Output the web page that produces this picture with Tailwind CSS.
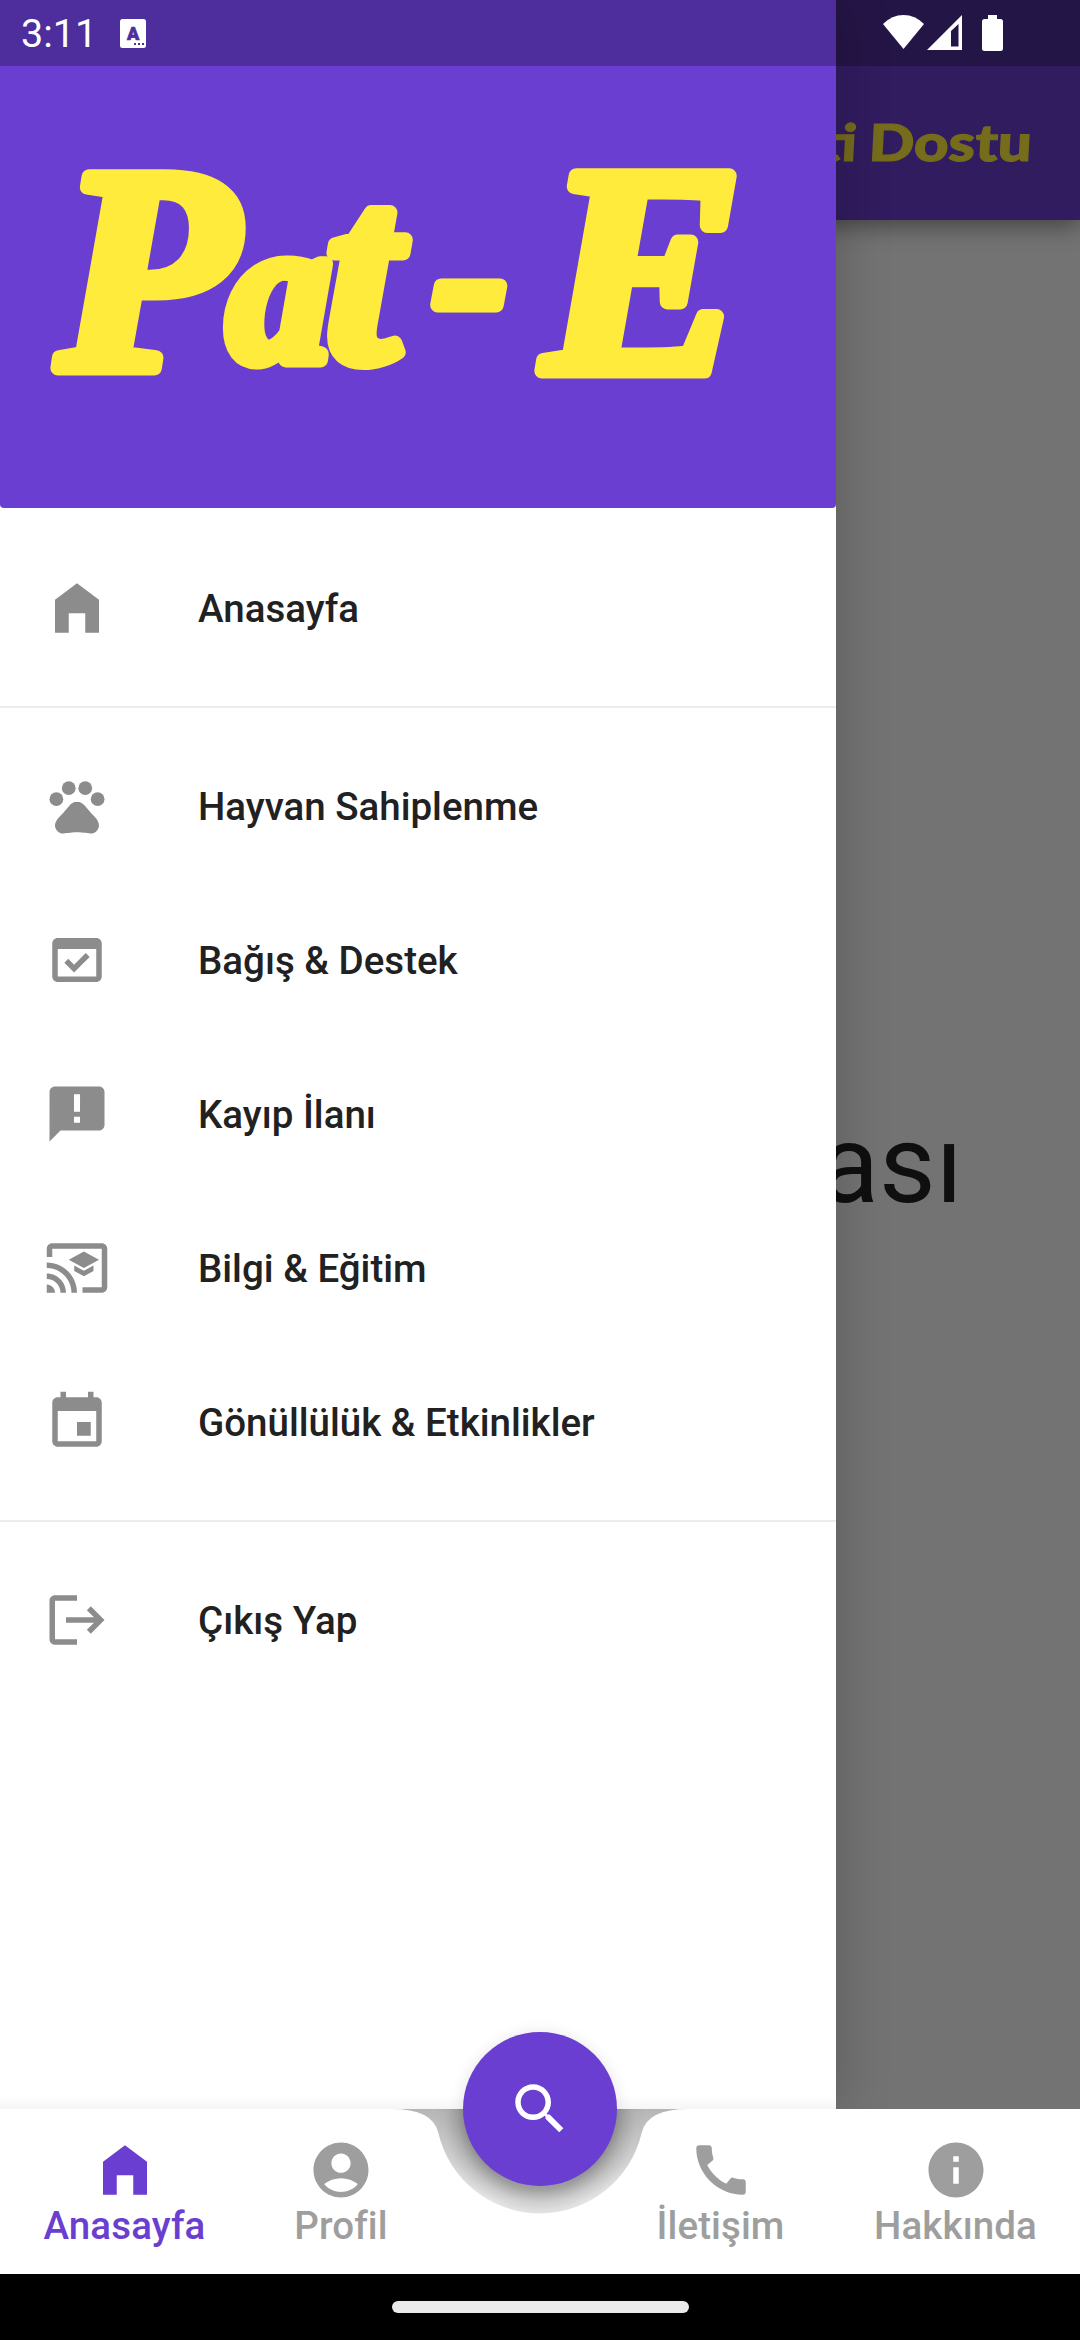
<!DOCTYPE html>
<html lang="tr">
<head>
<meta charset="utf-8">
<title>Pat-E</title>
<script src="https://cdn.jsdelivr.net/npm/@tailwindcss/browser@4"></script>
</head>
<body class="bg-black">
<div class="relative flex h-[2340px] w-[1080px] flex-col overflow-hidden font-['Roboto',sans-serif]">

  <!-- Dimmed page behind the drawer -->
  <header class="relative z-10 flex h-[220px] shrink-0 items-center justify-end bg-[#311c5f] pt-[66px] pr-[48px] shadow-[0_6px_22px_rgba(0,0,0,0.42)]">
    <svg class="h-[80px] w-[216px]" viewBox="0 0 216 80">
      <g class="fill-[#756c1c] stroke-[#756c1c] font-['Lato'] text-[51px] font-black" stroke-width="1.2" transform="translate(0 58) skewX(-3)">
        <text x="2" y="0" textLength="38" lengthAdjust="spacingAndGlyphs">ti</text>
        <text x="52" y="0" textLength="163" lengthAdjust="spacingAndGlyphs">Dostu</text>
      </g>
    </svg>
  </header>
  <main class="flex h-[1889px] shrink-0 items-center justify-end bg-[#737373] pr-[117px]">
    <p class="text-[110px] leading-[129px] text-[#0f0f0f]">ası</p>
  </main>

  <!-- Bottom bar -->
  <nav class="relative z-30 h-[165px] shrink-0 bg-linear-to-b from-[#b6b6b6] from-0% to-[#eeeeee] to-55%">
    <svg class="absolute inset-0 h-[165px] w-[1080px] overflow-visible" viewBox="0 0 1080 165">
      <defs>
        <radialGradient id="glow" cx="540" cy="11" r="106" gradientUnits="userSpaceOnUse">
          <stop offset=".66" stop-color="#000" stop-opacity=".27"/>
          <stop offset=".78" stop-color="#000" stop-opacity=".13"/>
          <stop offset=".9" stop-color="#000" stop-opacity=".03"/>
          <stop offset="1" stop-color="#000" stop-opacity="0"/>
        </radialGradient>
        <linearGradient id="edge" x1="0" y1="0" x2="0" y2="1">
          <stop offset="0" stop-color="#000" stop-opacity="0"/>
          <stop offset="1" stop-color="#000" stop-opacity=".035"/>
        </linearGradient>
      </defs>
      <rect x="0" y="-14" width="836" height="14" fill="url(#edge)"/>
      <path d="M420 0h240v120H420z" fill="url(#glow)"/>
      <path d="M0 0H391.5Q432.75 0 438.2 23.5A104.5 104.5 0 0 0 641.8 23.5Q647.25 0 688.5 0H1080V165H0z" fill="#fff"/>
    </svg>
    <div class="relative flex h-full pt-[28px] text-[38.5px] leading-[45px] font-medium tracking-[0.1px] text-[#9e9e9e]">
      <a class="flex w-[249px] flex-col items-center text-[#693ed0]">
        <svg class="size-[66px]" viewBox="0 0 24 24" fill="currentColor"><path d="M4 9v12h5v-7.1h6V21h5V9l-8-6z"/></svg>
        <span>Anasayfa</span>
      </a>
      <a class="flex w-[184px] flex-col items-center">
        <svg class="size-[66px]" viewBox="0 0 24 24" fill="currentColor"><path d="M12 2C6.48 2 2 6.48 2 12s4.480 10 10 10 10-4.480 10-10S17.520 2 12 2zm0 4c1.930 0 3.500 1.570 3.500 3.500S13.930 13 12 13s-3.500-1.570-3.500-3.500S10.070 6 12 6zm0 14c-2.030 0-4.430-.820-6.140-2.880C7.550 15.800 9.680 15 12 15s4.450.800 6.140 2.120C16.430 19.180 14.030 20 12 20z"/></svg>
        <span>Profil</span>
      </a>
      <a class="ml-[174px] flex w-[227px] flex-col items-center">
        <svg class="size-[66px]" viewBox="0 0 24 24" fill="currentColor"><path d="M20.010 15.380c-1.230 0-2.420-.200-3.530-.560-.350-.120-.740-.030-1.010.240l-1.570 1.970c-2.830-1.350-5.480-3.900-6.890-6.830l1.950-1.660c.270-.280.350-.670.240-1.020-.370-1.110-.560-2.300-.560-3.530 0-.540-.450-.990-.990-.990H4.190C3.650 3 3 3.240 3 3.990 3 13.280 10.730 21 20.010 21c.710 0 .990-.630.990-1.180v-3.450c0-.540-.450-.990-.990-.990z"/></svg>
        <span>İletişim</span>
      </a>
      <a class="flex w-[243px] flex-col items-center">
        <svg class="size-[66px]" viewBox="0 0 24 24" fill="currentColor"><path d="M12 2C6.480 2 2 6.480 2 12s4.480 10 10 10 10-4.480 10-10S17.520 2 12 2zm1 15h-2v-6h2v6zm0-8h-2V7h2v2z"/></svg>
        <span>Hakkında</span>
      </a>
    </div>
  </nav>

  <!-- System gesture bar -->
  <footer class="relative flex h-[66px] shrink-0 justify-center bg-black pt-[27px]">
    <div class="h-3 w-[297px] rounded-full bg-[#ebebeb]"></div>
  </footer>

  <!-- Navigation drawer -->
  <aside class="absolute top-0 left-0 z-20 h-[2109px] w-[836px] bg-white shadow-[0_0_50px_rgba(0,0,0,0.22)]">
    <div class="h-[508px] rounded-b-[4px] bg-[#693ed0]">
      <svg class="h-[508px] w-[836px]" viewBox="0 0 836 508">
        <g class="fill-[#ffeb3b] stroke-[#ffeb3b] font-['Liberation_Serif'] font-bold italic" stroke-width="15" stroke-linejoin="round">
          <text transform="translate(58 368)" font-size="292">P</text>
          <text transform="translate(228 360)" font-size="205">a</text>
          <text transform="translate(326 360)" font-size="262">t</text>
          <text transform="translate(433 348)" font-size="225">-</text>
          <text transform="translate(544 371)" font-size="298">E</text>
        </g>
      </svg>
    </div>
    <ul class="pt-[23px] text-[38.5px] leading-[45px] font-medium text-[#212121]">
      <li class="flex h-[154px] items-center gap-[88px] pl-[44px]">
        <svg class="size-[66px] text-[#8c8c8c]" viewBox="0 0 24 24" fill="currentColor"><path d="M4 9v12h5v-7.100h6V21h5V9l-8-6z"/></svg>
        <span>Anasayfa</span>
      </li>
      <li class="flex h-[44px] items-center"><div class="h-[2px] w-full bg-[#ececec]"></div></li>
      <li class="flex h-[154px] items-center gap-[88px] pl-[44px]">
        <svg class="size-[66px] text-[#8c8c8c]" viewBox="0 0 24 24" fill="currentColor"><circle cx="4.500" cy="9.500" r="2.500"/><circle cx="9" cy="5.500" r="2.500"/><circle cx="15" cy="5.500" r="2.500"/><circle cx="19.500" cy="9.500" r="2.500"/><path d="M17.340 14.860c-.870-1.020-1.600-1.890-2.480-2.910-.460-.540-1.050-1.080-1.750-1.320-.110-.040-.220-.070-.330-.090-.250-.040-.520-.040-.780-.040s-.530 0-.790.050c-.110.020-.220.050-.330.090-.700.240-1.280.780-1.750 1.320-.870 1.020-1.600 1.890-2.480 2.910-1.310 1.310-2.920 2.760-2.620 4.790.290 1.020 1.020 2.030 2.330 2.320.730.150 3.060-.440 5.540-.440h.180c2.480 0 4.810.580 5.540.440 1.310-.290 2.040-1.310 2.330-2.320.310-2.040-1.300-3.490-2.610-4.800z"/></svg>
        <span>Hayvan Sahiplenme</span>
      </li>
      <li class="flex h-[154px] items-center gap-[88px] pl-[44px]">
        <svg class="size-[66px] text-[#8c8c8c]" viewBox="0 0 24 24" fill="currentColor"><path d="M16.600 10.880l-1.420-1.420-4.240 4.250-2.120-2.130L7.400 13l3.540 3.540z"/><path d="M19 4H5c-1.110 0-2 .900-2 2v12c0 1.100.890 2 2 2h14c1.100 0 2-.900 2-2V6c0-1.100-.890-2-2-2zm0 14H5V8h14v10z"/></svg>
        <span>Bağış &amp; Destek</span>
      </li>
      <li class="flex h-[154px] items-center gap-[88px] pl-[44px]">
        <svg class="size-[66px] text-[#8c8c8c]" viewBox="0 0 24 24" fill="currentColor"><path d="M20 2H4c-1.100 0-1.990.900-1.990 2L2 22l4-4h14c1.100 0 2-.900 2-2V4c0-1.100-.900-2-2-2zm-6.900 13.200h-2.200V13h2.200v2.200zm0-4h-2.200V4.800h2.200v6.400z"/></svg>
        <span>Kayıp İlanı</span>
      </li>
      <li class="flex h-[154px] items-center gap-[88px] pl-[44px]">
        <svg class="size-[66px] text-[#8c8c8c]" viewBox="0 0 24 24" fill="currentColor"><path d="M21 3H3c-1.100 0-2 .900-2 2v3h2V5h18v14h-7v2h7c1.100 0 2-.900 2-2V5c0-1.100-.900-2-2-2zM1 18v3h3c0-1.660-1.340-3-3-3zm0-4v2c2.760 0 5 2.240 5 5h2c0-3.870-3.130-7-7-7zm0-4v2c4.970 0 9 4.030 9 9h2c0-6.080-4.930-11-11-11zm10 1.090v2L14.500 15l3.500-1.910v-2L14.500 13 11 11.090zM14.500 6 9 9l5.500 3L20 9l-5.500-3z"/></svg>
        <span>Bilgi &amp; Eğitim</span>
      </li>
      <li class="flex h-[154px] items-center gap-[88px] pl-[44px]">
        <svg class="size-[66px] text-[#8c8c8c]" viewBox="0 0 24 24" fill="currentColor"><path d="M17 12h-5v5h5v-5zM16 1v2H8V1H6v2H5c-1.110 0-1.990.900-1.990 2L3 19c0 1.100.890 2 2 2h14c1.100 0 2-.900 2-2V5c0-1.100-.900-2-2-2h-1V1h-2zm3 18H5V8h14v11z"/></svg>
        <span>Gönüllülük &amp; Etkinlikler</span>
      </li>
      <li class="flex h-[44px] items-center"><div class="h-[2px] w-full bg-[#ececec]"></div></li>
      <li class="flex h-[154px] items-center gap-[88px] pl-[44px]">
        <svg class="size-[66px] text-[#8c8c8c]" viewBox="0 0 24 24" fill="currentColor"><path d="m17 7-1.410 1.410L18.170 11H8v2h10.170l-2.580 2.580L17 17l5-5zM4 5h8V3H4c-1.100 0-2 .900-2 2v14c0 1.100.900 2 2 2h8v-2H4V5z"/></svg>
        <span>Çıkış Yap</span>
      </li>
    </ul>
  </aside>

  <!-- Floating search button -->
  <button class="absolute top-[2032px] left-[463px] z-40 flex size-[154px] items-center justify-center rounded-full bg-[#693ed0] shadow-[0_2px_16px_rgba(0,0,0,0.12)]">
    <svg class="size-[66px] text-white" viewBox="0 0 24 24" fill="currentColor"><path d="M15.500 14h-.790l-.280-.270C15.410 12.590 16 11.110 16 9.500 16 5.910 13.090 3 9.500 3S3 5.910 3 9.500 5.910 16 9.500 16c1.610 0 3.090-.590 4.230-1.570l.270.280v.790l5 4.990L20.490 19l-4.990-5zm-6 0C7.010 14 5 11.990 5 9.500S7.010 5 9.500 5 14 7.010 14 9.500 11.990 14 9.500 14z"/></svg>
  </button>

  <!-- Status bar -->
  <div class="absolute inset-x-0 top-0 z-50 flex h-[66px] items-center bg-black/25 pl-[21px]">
    <span class="w-[99px] pt-[2px] text-[39.500px] leading-[66px] text-white">3:11</span>
    <svg class="h-[29px] w-[26px]" viewBox="0 0 26 29">
      <rect width="26" height="29" rx="2.500" fill="#fff"/>
      <text x="13.200" y="20.500" text-anchor="middle" class="fill-[#4f2f9c] stroke-[#4f2f9c] font-['Roboto'] text-[18px] font-black" stroke-width=".7">A</text>
      <path d="M14 24h2v2h-2zM18 24h2v2h-2zM22 24h2v2h-2z" fill="#4f2f9c"/>
    </svg>
    <svg class="ml-[737px] h-[36px] w-[120px]" viewBox="0 0 120 36">
      <path d="M0 9Q9 0 20.500 0T41 9L20.500 34z" fill="#fff"/>
      <path fill-rule="evenodd" d="M44 35 79 0v35zM68 31.500h7.500V9L68 16z" fill="#fff"/>
      <path d="M105 0h9v4h3.500a2.500 2.500 0 0 1 2.500 2.500v27a2.500 2.500 0 0 1-2.500 2.500h-16a2.500 2.500 0 0 1-2.500-2.500v-27a2.500 2.500 0 0 1 2.500-2.500h3.500z" fill="#fff"/>
    </svg>
  </div>
</div>
</body>
</html>
